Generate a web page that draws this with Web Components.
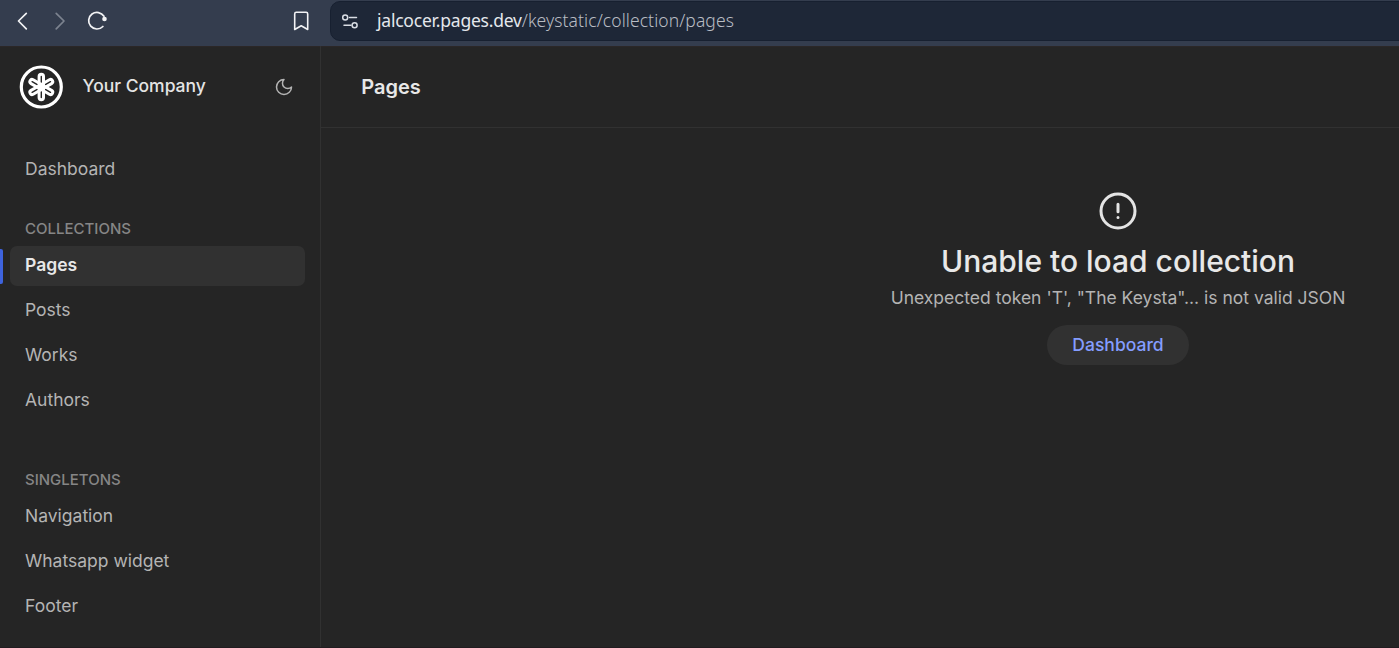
<!DOCTYPE html>
<html lang="en">
<head>
<meta charset="utf-8">
<title>Pages</title>
<style>
html,body{margin:0;height:100%;overflow:hidden;background:#252525}
body{font-family:Inter,"Liberation Sans",sans-serif;font-size:17.5px;color:#b4b4b4}
</style>
</head>
<body>
<app-window></app-window>
<script>
const define = (name, html) => {
  const t = document.createElement('template');
  t.innerHTML = html;
  customElements.define(name, class extends HTMLElement {
    constructor() {
      super();
      this.attachShadow({mode: 'open'}).append(t.content.cloneNode(true));
    }
  });
};

define('browser-bar', `
<style>
:host{display:flex;box-sizing:border-box;height:46px;flex:none;background:#343d4e;overflow:hidden}
svg{display:block;flex:none}
.tools{display:flex;width:330px;flex:none;height:42px}
.url{box-sizing:border-box;flex:none;width:1200px;height:40px;margin-top:1px;border:1px solid #172030;border-radius:10px;background:#1e2737;display:flex;align-items:center}
.text{margin:-2px 0 0 6px;font:17.5px/24px "Noto Sans",sans-serif;font-weight:300;color:#b9bdc4;white-space:pre;letter-spacing:.08px}
.text b{font-weight:400;color:#e4e7ec;letter-spacing:-.22px}
</style>
<div class="tools">
<svg width="330" height="42" fill="none" stroke="#f2f3f5" stroke-width="1.7" stroke-linecap="round" stroke-linejoin="round">
<path d="M26.3 13.3 18.5 21l7.8 7.8"/>
<path d="M56.200 13.300 64 21l-7.800 7.800" stroke="#7c838f"/>
<path d="M102.900 26.500A8.300 8.300 0 1 1 104 16.300"/>
<circle cx="104.500" cy="19" r="2.300" fill="#f2f3f5" stroke="none"/>
<path d="M296.300 12.300h9.800a1.600 1.600 0 0 1 1.600 1.600v15.600l-6.500-3.700-6.500 3.700V13.900a1.600 1.600 0 0 1 1.600-1.600z" stroke-width="1.600"/>
</svg></div>
<div class="url">
<svg width="40" height="38" fill="none" stroke="#d9dde4" stroke-width="1.500" stroke-linecap="round"><circle cx="14.200" cy="15.500" r="2.500"/><path d="M18.500 15.500h7M13 23.300h7"/><circle cx="23.600" cy="23.300" r="2.500"/></svg>
<span class="text"><b>jalcocer.pages.dev</b>/keystatic/collection/pages</span>
</div>`);

define('brand-header', `
<style>
:host{display:flex;align-items:center;height:82px;padding:0 26px 0 19px}
svg{display:block;flex:none}
.name{margin:-2px 0 0 19.500px;flex:1;color:#e4e4e4;font-weight:500;line-height:24px;white-space:nowrap}
</style>
<svg width="44" height="44" viewBox="-22.300 -22 44 44" fill="none" stroke="#fff">
<circle r="20" stroke-width="3.200"/>
<g stroke-width="3"><rect x="-2.200" y="-12.800" width="4.400" height="12.800" rx="2.200"/>
<rect x="-2.200" y="-12.800" width="4.400" height="12.800" rx="2.200" transform="rotate(60)"/>
<rect x="-2.200" y="-12.800" width="4.400" height="12.800" rx="2.200" transform="rotate(120)"/>
<rect x="-2.200" y="-12.800" width="4.400" height="12.800" rx="2.200" transform="rotate(180)"/>
<rect x="-2.200" y="-12.800" width="4.400" height="12.800" rx="2.200" transform="rotate(240)"/>
<rect x="-2.200" y="-12.800" width="4.400" height="12.800" rx="2.200" transform="rotate(300)"/></g>
</svg>
<span class="name"><slot></slot></span>
<svg width="20" height="20" viewBox="0 0 24 24" fill="none" stroke="#b4b4b4" stroke-width="1.800" stroke-linecap="round" stroke-linejoin="round"><path d="M12 3a6 6 0 0 0 9 9 9 9 0 1 1-9-9Z"/></svg>`);

define('nav-item', `
<style>
:host{display:flex;align-items:center;box-sizing:border-box;height:40px;margin:0 15px 5px 10px;padding:0 15px 2px;border-radius:7px;white-space:nowrap;line-height:24px;position:relative}
:host([current]){background:#313131;color:#e8e8e8;font-weight:600}
:host([current])::before{content:"";position:absolute;left:-10px;top:2.500px;width:3px;height:35px;background:#3e63dd;border-radius:0 2px 2px 0}
</style><slot></slot>`);

define('nav-section', `
<style>
:host{display:block}
h2{margin:0;padding:24px 25px 7px;font-size:15px;line-height:20px;font-weight:500;color:#868686;text-transform:uppercase;white-space:nowrap}
</style><h2><slot name="title"></slot></h2><slot></slot>`);

define('side-nav', `
<style>
:host{display:block;box-sizing:border-box;width:321px;flex:none;border-right:1px solid #313131}
nav{padding-top:22px}
nav-section + nav-section{margin-top:25px}
</style>
<brand-header>Your Company</brand-header>
<nav>
<nav-item>Dashboard</nav-item>
<nav-section><span slot="title">Collections</span>
<nav-item current>Pages</nav-item><nav-item>Posts</nav-item><nav-item>Works</nav-item><nav-item>Authors</nav-item></nav-section>
<nav-section><span slot="title">Singletons</span>
<nav-item>Navigation</nav-item><nav-item>Whatsapp widget</nav-item><nav-item>Footer</nav-item></nav-section>
</nav>`);

define('page-header', `
<style>
:host{display:flex;align-items:center;box-sizing:border-box;height:82px;padding:0 40.300px;border-bottom:1px solid #313131}
h1{margin:0;font-size:20px;line-height:26px;font-weight:600;color:#e8e8e8}
</style><h1><slot></slot></h1>`);

define('pill-button', `
<style>
:host{display:flex;align-items:center;justify-content:center;box-sizing:border-box;width:142px;height:40px;padding-bottom:1px;border-radius:20px;background:#313131;color:#849dff;font-weight:500}
</style><slot></slot>`);

define('empty-state', `
<style>
:host{display:flex;flex-direction:column;align-items:center;padding-top:63px;white-space:nowrap}
svg{display:block}
h2{margin:11px 0 0;font-size:30px;line-height:38px;font-weight:500;color:#e8e8e8}
p{margin:6px 0 15px;line-height:24px}
</style>
<svg width="40" height="40" viewBox="-20 -20 40 40" fill="none" stroke="#e4e4e4" stroke-width="3" stroke-linecap="round"><circle r="17"/><path d="M0-6.800V.8M0 6.500v.01"/></svg>
<h2><slot name="title"></slot></h2><p><slot></slot></p><slot name="action"></slot>`);

define('app-window', `
<style>
:host{display:flex;flex-direction:column;height:100vh;overflow:hidden}
.body{display:flex;flex:1;min-height:0;overflow:hidden;box-shadow:inset 0 1px #2b2727}
main{width:1594px;flex:none}
footer{height:1px;flex:none;background:#211c20}
</style>
<browser-bar></browser-bar>
<div class="body"><side-nav></side-nav>
<main><page-header>Pages</page-header>
<empty-state><span slot="title">Unable to load collection</span>Unexpected token 'T', "The Keysta"... is not valid JSON<pill-button slot="action">Dashboard</pill-button></empty-state></main></div>
<footer></footer>`);
</script>
</body>
</html>
